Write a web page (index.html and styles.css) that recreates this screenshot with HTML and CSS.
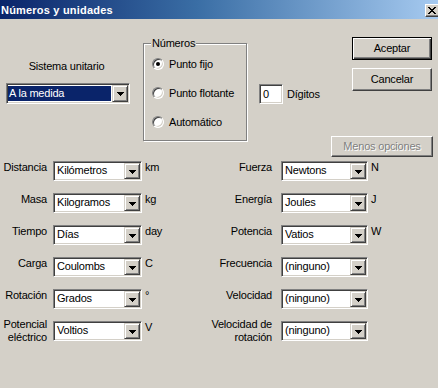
FILE: index.html
```html
<!DOCTYPE html>
<html lang="es">
<head>
<meta charset="utf-8">
<title>Números y unidades</title>
<link rel="stylesheet" href="styles.css">
</head>
<body>
<div class="win">
  <div class="titlebar">
    <span class="title">Números y unidades</span>
    <span class="close"><svg width="8" height="7" viewBox="0 0 8 7" shape-rendering="crispEdges"><path d="M0 0h2v1h1v1h2v-1h1v-1h2v1h-1v1h-1v1h-1v1h1v1h1v1h1v1h-2v-1h-1v-1h-2v1h-1v1h-2v-1h1v-1h1v-1h1v-1h-1v-1h-1v-1h-1z" fill="#000"/></svg></span>
  </div>

  <div class="top">
    <div class="sys">
      <div class="sys-label">Sistema unitario</div>
      <div class="combo main"><span class="val sel">A la medida</span><span class="drop"><svg width="7" height="4" viewBox="0 0 7 4" shape-rendering="crispEdges"><path d="M0 0h7v1h-1v1h-1v1h-1v1h-1v-1h-1v-1h-1v-1h-1z"/></svg></span></div>
    </div>

    <fieldset class="group">
      <legend>Números</legend>
      <div class="radio-row"><span class="radio on"></span><span>Punto fijo</span></div>
      <div class="radio-row"><span class="radio"></span><span>Punto flotante</span></div>
      <div class="radio-row"><span class="radio"></span><span>Automático</span></div>
    </fieldset>

    <div class="digits"><span class="field">0</span><span>Dígitos</span></div>

    <div class="btns">
      <div class="btn default"><span>Aceptar</span></div>
      <div class="btn"><span>Cancelar</span></div>
      <div class="btn wide disabled"><span>Menos opciones</span></div>
    </div>
  </div>

  <div class="units">
    <div class="lbl">Distancia</div>
    <div class="combo"><span class="val">Kilómetros</span><span class="drop"><svg width="7" height="4" viewBox="0 0 7 4" shape-rendering="crispEdges"><path d="M0 0h7v1h-1v1h-1v1h-1v1h-1v-1h-1v-1h-1v-1h-1z"/></svg></span></div>
    <div class="unit">km</div>
    <div class="lbl r">Fuerza</div>
    <div class="combo"><span class="val">Newtons</span><span class="drop"><svg width="7" height="4" viewBox="0 0 7 4" shape-rendering="crispEdges"><path d="M0 0h7v1h-1v1h-1v1h-1v1h-1v-1h-1v-1h-1v-1h-1z"/></svg></span></div>
    <div class="unit">N</div>

    <div class="lbl">Masa</div>
    <div class="combo"><span class="val">Kilogramos</span><span class="drop"><svg width="7" height="4" viewBox="0 0 7 4" shape-rendering="crispEdges"><path d="M0 0h7v1h-1v1h-1v1h-1v1h-1v-1h-1v-1h-1v-1h-1z"/></svg></span></div>
    <div class="unit">kg</div>
    <div class="lbl r">Energía</div>
    <div class="combo"><span class="val">Joules</span><span class="drop"><svg width="7" height="4" viewBox="0 0 7 4" shape-rendering="crispEdges"><path d="M0 0h7v1h-1v1h-1v1h-1v1h-1v-1h-1v-1h-1v-1h-1z"/></svg></span></div>
    <div class="unit">J</div>

    <div class="lbl">Tiempo</div>
    <div class="combo"><span class="val">Días</span><span class="drop"><svg width="7" height="4" viewBox="0 0 7 4" shape-rendering="crispEdges"><path d="M0 0h7v1h-1v1h-1v1h-1v1h-1v-1h-1v-1h-1v-1h-1z"/></svg></span></div>
    <div class="unit">day</div>
    <div class="lbl r">Potencia</div>
    <div class="combo"><span class="val">Vatios</span><span class="drop"><svg width="7" height="4" viewBox="0 0 7 4" shape-rendering="crispEdges"><path d="M0 0h7v1h-1v1h-1v1h-1v1h-1v-1h-1v-1h-1v-1h-1z"/></svg></span></div>
    <div class="unit">W</div>

    <div class="lbl">Carga</div>
    <div class="combo"><span class="val">Coulombs</span><span class="drop"><svg width="7" height="4" viewBox="0 0 7 4" shape-rendering="crispEdges"><path d="M0 0h7v1h-1v1h-1v1h-1v1h-1v-1h-1v-1h-1v-1h-1z"/></svg></span></div>
    <div class="unit">C</div>
    <div class="lbl r">Frecuencia</div>
    <div class="combo"><span class="val">(ninguno)</span><span class="drop"><svg width="7" height="4" viewBox="0 0 7 4" shape-rendering="crispEdges"><path d="M0 0h7v1h-1v1h-1v1h-1v1h-1v-1h-1v-1h-1v-1h-1z"/></svg></span></div>
    <div class="unit"></div>

    <div class="lbl">Rotación</div>
    <div class="combo"><span class="val">Grados</span><span class="drop"><svg width="7" height="4" viewBox="0 0 7 4" shape-rendering="crispEdges"><path d="M0 0h7v1h-1v1h-1v1h-1v1h-1v-1h-1v-1h-1v-1h-1z"/></svg></span></div>
    <div class="unit">°</div>
    <div class="lbl r">Velocidad</div>
    <div class="combo"><span class="val">(ninguno)</span><span class="drop"><svg width="7" height="4" viewBox="0 0 7 4" shape-rendering="crispEdges"><path d="M0 0h7v1h-1v1h-1v1h-1v1h-1v-1h-1v-1h-1v-1h-1z"/></svg></span></div>
    <div class="unit"></div>

    <div class="lbl two">Potencial<br>eléctrico</div>
    <div class="combo"><span class="val">Voltios</span><span class="drop"><svg width="7" height="4" viewBox="0 0 7 4" shape-rendering="crispEdges"><path d="M0 0h7v1h-1v1h-1v1h-1v1h-1v-1h-1v-1h-1v-1h-1z"/></svg></span></div>
    <div class="unit">V</div>
    <div class="lbl r two">Velocidad de<br>rotación</div>
    <div class="combo"><span class="val">(ninguno)</span><span class="drop"><svg width="7" height="4" viewBox="0 0 7 4" shape-rendering="crispEdges"><path d="M0 0h7v1h-1v1h-1v1h-1v1h-1v-1h-1v-1h-1v-1h-1z"/></svg></span></div>
    <div class="unit"></div>
  </div>
</div>
</body>
</html>
```

FILE: styles.css
```css
html, body {
  margin: 0;
  padding: 0;
  background: #d4d0c8;
}
body {
  font-family: "Liberation Sans", Arial, sans-serif;
  font-size: 11px;
  letter-spacing: -0.2px;
  color: #000;
}
.win {
  width: 438px;
  height: 388px;
  overflow: hidden;
  background: #d4d0c8;
  display: flex;
  flex-direction: column;
}

/* title bar */
.titlebar {
  height: 19px;
  flex: none;
  display: flex;
  align-items: flex-start;
  background: linear-gradient(to right, #0a246a 0%, #3a6ea5 45%, #a6caf0 100%);
  color: #fff;
}
.title {
  font-weight: bold;
  letter-spacing: 0.2px;
  line-height: 13px;
  margin: 4px 0 0 1px;
}
.close {
  margin: 4px -3px 0 auto;
  width: 16px;
  height: 13px;
  box-sizing: border-box;
  background: #d4d0c8;
  border: 1px solid;
  border-color: #fff #404040 #404040 #fff;
  box-shadow: inset -1px -1px 0 #808080;
  display: flex;
  align-items: center;
  justify-content: center;
}
.close svg { display: block; margin-left: -2px; }

/* top area */
.top {
  height: 142px;
  flex: none;
  display: flex;
  align-items: flex-start;
  padding-right: 5px;
}
.sys {
  margin-left: 6px;
  width: 124px;
  padding-top: 41px;
  display: flex;
  flex-direction: column;
}
.sys-label {
  line-height: 13px;
  text-align: center;
  padding-right: 3px;
}
.combo {
  height: 20px;
  box-sizing: border-box;
  border: 1px solid;
  border-color: #808080 #fff #fff #808080;
  box-shadow: inset 1px 1px 0 #404040, inset -1px -1px 0 #d4d0c8;
  background: #fff;
  padding: 1px;
  display: flex;
  align-items: stretch;
}
.combo.main {
  margin-top: 10px;
  height: 21px;
}
.val {
  flex: 1;
  min-width: 0;
  line-height: 15px;
  padding-left: 2px;
  white-space: nowrap;
  overflow: hidden;
}
.val.sel {
  background: #0a246a;
  color: #fff;
  margin: 1px 1px 1px 0;
  line-height: 15px;
  padding-left: 1px;
}
.drop {
  width: 16px;
  flex: none;
  box-sizing: border-box;
  background: #d4d0c8;
  border: 1px solid;
  border-color: #d4d0c8 #404040 #404040 #d4d0c8;
  box-shadow: inset 1px 1px 0 #fff, inset -1px -1px 0 #808080;
  display: flex;
  align-items: center;
  justify-content: center;
}
.drop svg { display: block; margin-top: 1px; }

/* group box */
.group {
  margin: 18px 0 0 13px;
  width: 104px;
  height: 104px;
  box-sizing: border-box;
  padding: 8px 0 0 8px;
  border: 1px solid #808080;
  box-shadow: 1px 1px 0 #fff, inset 1px 1px 0 #fff;
  display: flex;
  flex-direction: column;
  gap: 17px;
  min-width: 0;
}
.group legend {
  padding: 0 1px;
  margin-left: -1px;
  line-height: 13px;
  background: #d4d0c8;
}
.radio-row {
  height: 12px;
  display: flex;
  align-items: center;
  gap: 5px;
  white-space: nowrap;
}
.radio {
  width: 12px;
  height: 12px;
  flex: none;
  box-sizing: border-box;
  border-radius: 50%;
  border: 1px solid;
  border-color: #808080 #fff #fff #808080;
  box-shadow: inset 1px 1px 0 #404040, inset -1px -1px 0 #d4d0c8;
  background: #fff;
  display: flex;
  align-items: center;
  justify-content: center;
}
.radio.on::after {
  content: "";
  width: 4px;
  height: 4px;
  border-radius: 50%;
  background: #000;
}

/* digits */
.digits {
  margin: 65px 0 0 12px;
  display: flex;
  align-items: center;
  gap: 4px;
}
.field {
  width: 24px;
  height: 20px;
  box-sizing: border-box;
  border: 1px solid;
  border-color: #808080 #fff #fff #808080;
  box-shadow: inset 1px 1px 0 #404040, inset -1px -1px 0 #d4d0c8;
  background: #fff;
  padding-left: 3px;
  line-height: 18px;
}

/* buttons */
.btns {
  margin: 18px 0 0 auto;
  width: 102px;
  display: flex;
  flex-direction: column;
  align-items: flex-end;
}
.btn {
  width: 80px;
  height: 23px;
  margin-right: 1px;
  box-sizing: border-box;
  border: 1px solid;
  border-color: #fff #404040 #404040 #fff;
  box-shadow: inset -1px -1px 0 #808080;
  background: #d4d0c8;
  display: flex;
  align-items: center;
  justify-content: center;
  line-height: 13px;
  white-space: nowrap;
}
.btn + .btn { margin-top: 8px; }
.btn.default {
  border-color: #000;
  box-shadow: inset 1px 1px 0 #fff, inset -1px -1px 0 #404040, inset -2px -2px 0 #808080;
}
.btn.wide {
  width: 102px;
  height: 21px;
  margin-right: 0;
  margin-top: 45px;
}
.btn.disabled {
  color: #808080;
  text-shadow: 1px 1px 0 #fff;
}

/* unit rows */
.units {
  display: grid;
  grid-template-columns: 53px 89px 42px 97px 87px 1fr;
  grid-template-rows: repeat(6, 20px);
  row-gap: 12px;
}
.lbl {
  text-align: right;
  padding-right: 6px;
  line-height: 13px;
  align-self: start;
  white-space: nowrap;
}
.lbl.r { padding-right: 9px; }
.lbl.two { align-self: center; }
.unit {
  padding-left: 3px;
  line-height: 13px;
  align-self: start;
}
```
